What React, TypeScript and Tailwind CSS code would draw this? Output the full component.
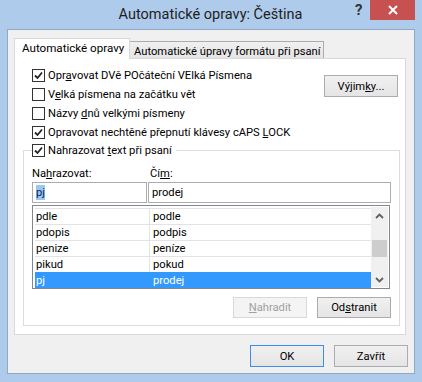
import React from "react";

const ui = "font-['Roboto',sans-serif] text-[11.2px] leading-[15px] text-black";

const Check = ({ on }: { on: boolean }) => (
  <span className="flex h-[13px] w-[13px] shrink-0 items-center justify-center border border-[#333333] bg-white">
    {on && (
      <svg width="9" height="9" viewBox="0 0 9 9">
        <path d="M1 4.5 L3.5 7 L8 1.5" fill="none" stroke="#222" strokeWidth="1.8" />
      </svg>
    )}
  </span>
);

const CheckRow = ({ on, children }: { on: boolean; children: React.ReactNode }) => (
  <div className="flex h-[19px] items-center gap-[3px]">
    <Check on={on} />
    <span className="whitespace-nowrap">{children}</span>
  </div>
);

const Btn = ({
  children,
  disabled,
  focused,
  className = "",
}: {
  children: React.ReactNode;
  disabled?: boolean;
  focused?: boolean;
  className?: string;
}) => (
  <div
    className={`flex h-[21px] w-[74px] items-center justify-center border ${
      disabled
        ? "border-[#d9d9d9] bg-[#f4f4f4] text-[#a0a0a0]"
        : focused
        ? "border-[#3c8ee8] bg-gradient-to-b from-[#f0f0f0] to-[#e5e5e5] text-black"
        : "border-[#acacac] bg-gradient-to-b from-[#f0f0f0] to-[#e5e5e5] text-black"
    } ${className}`}
  >
    {children}
  </div>
);

const rows = [
  ["pdle", "podle"],
  ["pdopis", "podpis"],
  ["penize", "peníze"],
  ["pikud", "pokud"],
  ["pj", "prodej"],
];

export default function App() {
  return (
    <div className={`flex h-[382px] w-[422px] flex-col bg-[#aecbeb] ${ui}`}>
      {/* title bar */}
      <div className="flex h-[29px] items-start">
        <div className="flex h-[29px] flex-1 items-center justify-center pl-[66px] font-['Roboto',sans-serif] text-[14.5px] text-[#1e1e1e]">
          Automatické opravy: Čeština
        </div>
        <div className="mt-[3px] w-[15px] text-[15px] font-bold leading-[15px] text-[#333]">?</div>
        <div className="flex h-[20px] w-[45px] items-center justify-center bg-[#c75050]">
          <svg width="10" height="10" viewBox="0 0 10 10">
            <path d="M1 1 L9 9 M9 1 L1 9" stroke="#fff" strokeWidth="2" />
          </svg>
        </div>
        <div className="w-[7px]" />
      </div>

      {/* client */}
      <div className="mx-[7px] flex h-[345px] flex-col border border-[#8fa8c6] bg-[#f0f0f0]">
        {/* tabs */}
        <div className="ml-[6px] mt-[8px] flex items-end">
          <div className="z-10 -mb-px flex h-[21px] w-[116px] items-start border border-b-0 border-[#d9d9d9] bg-white pl-[7px] pt-[2px] text-[11.6px]">
            Automatické opravy
          </div>
          <div className="flex h-[17px] items-center border border-b-0 border-l-0 border-[#acacac] bg-gradient-to-b from-[#f0f0f0] to-[#e5e5e5] pl-[4px] pr-[3px] pt-[2px]">
            Automatické úpravy formátu při psaní
          </div>
        </div>

        {/* panel */}
        <div className="ml-[6px] flex h-[277px] w-[392px] flex-col border border-[#d9d9d9] bg-white pl-[17px] pt-[7px]">
          <div className="flex">
            <div className="flex flex-col">
              <CheckRow on>
                Opr<u>a</u>vovat DVě POčáteční VElká Písmena
              </CheckRow>
              <CheckRow on={false}>
                V<u>e</u>lká písmena na začátku vět
              </CheckRow>
              <CheckRow on={false}>
                Názvy <u>d</u>nů velkými písmeny
              </CheckRow>
              <CheckRow on>
                Opravovat nechtěné přepnutí klávesy cAPS <u>L</u>OCK
              </CheckRow>
            </div>
            <div className="ml-auto mr-[7px] mt-[9px]">
              <Btn className="h-[22px]">
                Výjim<u>k</u>y...
              </Btn>
            </div>
          </div>

          <fieldset className="-ml-[9px] -mt-[1px] w-[376px] border border-[#dcdcdc] px-[8px] pb-[7px]">
            <legend className="pr-[4px]">
              <CheckRow on>
                Nahrazovat <u>t</u>ext při psaní
              </CheckRow>
            </legend>
            <div className="mt-[6px] flex">
              <span className="w-[118px]">
                Na<u>h</u>razovat:
              </span>
              <span>
                Čí<u>m</u>:
              </span>
            </div>
            <div className="mt-[1px] flex gap-[1px]">
              <div className="flex h-[21px] w-[115px] items-center border border-[#abadb3] bg-white px-[3px]">
                <span className="bg-[#99c9ef] text-[#0a246a]">pj</span>
              </div>
              <div className="flex h-[21px] w-[243px] items-center border border-[#abadb3] bg-white px-[3px]">
                prodej
              </div>
            </div>

            {/* list */}
            <div className="mt-[2px] flex h-[84px] w-[358px] border border-[#828790] bg-white p-px">
              <div className="flex flex-1 flex-col pl-px pt-px">
                {rows.map(([a, b], i) => {
                  const sel = i === rows.length - 1;
                  return (
                    <div
                      key={a}
                      className={`flex h-[16px] items-center border-t ${
                        sel ? "border-[#3399ff] bg-[#3399ff] text-white" : "border-[#e3e3e3]"
                      }`}
                    >
                      <span
                        className={`flex h-full w-[115px] items-center border-r pl-[1px] ${
                          sel ? "border-[#3399ff]" : "border-[#e3e3e3]"
                        }`}
                      >
                        {a}
                      </span>
                      <span className="pl-[3px]">{b}</span>
                    </div>
                  );
                })}
              </div>
              {/* scrollbar */}
              <div className="flex w-[17px] flex-col items-center bg-[#f0f0f0]">
                <svg className="mt-[6px]" width="9" height="6" viewBox="0 0 9 6">
                  <path d="M1 5 L4.5 1.5 L8 5" fill="none" stroke="#606060" strokeWidth="1.8" />
                </svg>
                <div className="mt-[21px] h-[17px] w-[15px] bg-[#cdcdcd]" />
                <svg className="mt-auto mb-[4px]" width="9" height="6" viewBox="0 0 9 6">
                  <path d="M1 1 L4.5 4.5 L8 1" fill="none" stroke="#606060" strokeWidth="1.8" />
                </svg>
              </div>
            </div>

            <div className="mt-[8px] flex justify-end gap-[10px]">
              <Btn disabled>
                <u>N</u>ahradit
              </Btn>
              <Btn>
                Od<u>s</u>tranit
              </Btn>
            </div>
          </fieldset>
        </div>

        {/* dialog buttons */}
        <div className="mr-[6px] mt-[10px] flex justify-end gap-[10px]">
          <Btn focused className="h-[22px]">OK</Btn>
          <Btn className="h-[22px]">Zavřít</Btn>
        </div>
      </div>
    </div>
  );
}
